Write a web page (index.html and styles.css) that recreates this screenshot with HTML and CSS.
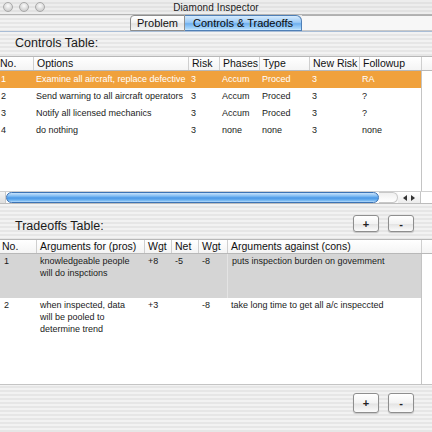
FILE: index.html
```html
<!DOCTYPE html>
<html>
<head>
<meta charset="utf-8">
<link rel="stylesheet" href="styles.css">
</head>
<body>
<div class="window">
  <div class="titlebar">
    <div class="lights"><span class="light"></span><span class="light"></span><span class="light"></span></div>
    <div class="title">Diamond Inspector</div>
    <div></div>
  </div>
  <div class="tabs">
    <div class="tabpad"></div>
    <div class="tab tab-first">Problem</div>
    <div class="tab tab-sel">Controls &amp; Tradeoffs</div>
    <div class="tabfill"></div>
  </div>

  <div class="label label1">Controls Table:</div>

  <div class="table t1">
    <div class="hdr g1">
      <div class="hc">No.</div><div class="hc">Options</div><div class="hc">Risk</div><div class="hc">Phases</div><div class="hc">Type</div><div class="hc">New Risk</div><div class="hc">Followup</div><div class="hc corner"></div>
    </div>
    <div class="tbody t1body">
      <div class="rows">
        <div class="row g1r sel"><div class="c num">1</div><div class="c">Examine all aircraft, replace defective</div><div class="c">3</div><div class="c">Accum</div><div class="c">Proced</div><div class="c">3</div><div class="c">RA</div></div>
        <div class="row g1r"><div class="c num">2</div><div class="c">Send warning to all aircraft operators</div><div class="c">3</div><div class="c">Accum</div><div class="c">Proced</div><div class="c">3</div><div class="c">?</div></div>
        <div class="row g1r"><div class="c num">3</div><div class="c">Notify all licensed mechanics</div><div class="c">3</div><div class="c">Accum</div><div class="c">Proced</div><div class="c">3</div><div class="c">?</div></div>
        <div class="row g1r"><div class="c num">4</div><div class="c">do nothing</div><div class="c">3</div><div class="c">none</div><div class="c">none</div><div class="c">3</div><div class="c">none</div></div>
      </div>
      <div class="vscroll"></div>
    </div>
    <div class="hscroll">
      <div class="hcap"></div>
      <div class="thumb"></div>
      <div class="track"></div>
      <div class="arrows"><span class="arr arr-l"></span><span class="arr arr-r"></span></div>
      <div class="hcorner"></div>
    </div>
  </div>

  <div class="midrow">
    <div class="label label2">Tradeoffs Table:</div>
    <div class="btns btns1"><button class="btn">+</button><button class="btn">-</button></div>
  </div>

  <div class="table t2">
    <div class="hdr g2">
      <div class="hc">No.</div><div class="hc">Arguments for (pros)</div><div class="hc">Wgt</div><div class="hc">Net</div><div class="hc">Wgt</div><div class="hc">Arguments against (cons)</div><div class="hc corner"></div>
    </div>
    <div class="tbody t2body">
      <div class="rows">
        <div class="row g2r r1"><div class="c">1</div><div class="c pros">knowledgeable people will do inspctions</div><div class="c">+8</div><div class="c">-5</div><div class="c">-8</div><div class="c lastc">puts inspection burden on govemment</div></div>
        <div class="row g2r r2"><div class="c">2</div><div class="c pros">when inspected, data will be pooled to determine trend</div><div class="c">+3</div><div class="c"></div><div class="c">-8</div><div class="c">take long time to get all a/c inspeccted</div></div>
      </div>
      <div class="vscroll"></div>
    </div>
  </div>

  <div class="btns btns2"><button class="btn">+</button><button class="btn">-</button></div>
</div>
</body>
</html>
```
FILE: styles.css
```css
* { box-sizing: border-box; }
html, body { margin: 0; padding: 0; }
body {
  width: 432px;
  height: 432px;
  overflow: hidden;
  font-family: "Liberation Sans", Arial, sans-serif;
  color: #1a1a1a;
  background: repeating-linear-gradient(to bottom, #f2f2f2 0, #f2f2f2 2px, #e6e6e6 2px, #e6e6e6 4px);
}
.window { display: flex; flex-direction: column; width: 432px; height: 432px; }

.titlebar {
  height: 15px;
  display: grid;
  grid-template-columns: 1fr auto 1fr;
  align-items: center;
  border-bottom: 1px solid #b4b4b4;
  background: repeating-linear-gradient(to bottom, #ededed 0, #ededed 2px, #e2e2e2 2px, #e2e2e2 4px);
}
.lights { display: flex; gap: 6px; padding-left: 3px; }
.light {
  width: 10px; height: 10px; border-radius: 50%;
  background: radial-gradient(circle at 50% 35%, #fbfbfb, #d2d2d2 70%, #bdbdbd);
  border: 1px solid #a9a9a9;
}
.title { font-size: 10px; color: #222; letter-spacing: 0.1px; }

.tabs { display: flex; height: 17px; border-bottom: 1px solid #a9bdd6; }
.tabpad { width: 130px; }
.tab {
  font-size: 11px; line-height: 15px; height: 16px;
  text-align: center; border: 1px solid #8e8e8e;
}
.tab-first {
  width: 55px;
  border-radius: 4px 0 0 0;
  background: linear-gradient(to bottom, #ffffff, #f0f0f0 50%, #e2e2e2 55%, #f6f6f6);
  color: #111;
}
.tab-sel {
  width: 117px;
  border-left: none;
  border-color: #4f7fb6;
  border-radius: 0 6px 0 0;
  background: linear-gradient(to bottom, #d6ebfd, #9ccaf6 45%, #6fb0ef 55%, #a8d6fb 90%, #cde8fd);
  color: #0a0a0a;
}
.tabfill {
  flex: 1; height: 16px;
  border-top: 1px solid #b0b0b0;
  border-bottom: 1px solid #c8c8c8;
  background: #f7f7f7;
}

.label { font-size: 12.5px; color: #1a1a1a; padding-left: 15px; }
.label1 { height: 24px; line-height: 23px; }

.table { background: #fff; }
.hdr {
  display: grid;
  height: 15px;
  border-top: 1px solid #b8b8b8;
  border-bottom: 1px solid #b8b8b8;
  background: linear-gradient(to bottom, #ffffff, #f4f4f4);
}
.hc {
  font-size: 10.5px; line-height: 13px; padding-left: 3px;
  border-left: 1px solid #cfcfcf; white-space: nowrap; overflow: hidden; color: #111;
}
.hc:first-child { border-left: none; padding-left: 0; }
.g1 { grid-template-columns: 33px 155px 31px 40px 50px 50px 62px 11px; }
.g1r { display: grid; grid-template-columns: 33px 155px 31px 40px 50px 50px 62px; }
.g2 { grid-template-columns: 36px 108px 27px 27px 29px 194px 11px; }
.g2r { display: grid; grid-template-columns: 36px 108px 27px 27px 29px 194px; }
.g2 .hc:first-child { padding-left: 2px; }

.tbody { display: flex; }
.rows { width: 421px; }
.vscroll { width: 11px; border-left: 1px solid #c4c4c4; background: #fff; }

.t1body { height: 120px; }
.row { font-size: 9px; color: #1a1a1a; }
.g1r { height: 17px; line-height: 16px; }
.g1r .c { padding-left: 3px; white-space: nowrap; overflow: hidden; }
.g1r .num { padding-left: 1px; }
.sel { background: #f0a13c; color: #fff; }

.hscroll {
  height: 13px; display: flex; align-items: stretch;
  border-top: 1px solid #d0d0d0; border-bottom: 1px solid #bcbcbc;
  background: #fafafa;
}
.hcap { width: 6px; border-right: 1px solid #c8c8c8; background: linear-gradient(to bottom, #f4f4f4, #dedede); }
.thumb {
  width: 373px;
  border: 1px solid #3c73b5;
  border-radius: 6px;
  background: linear-gradient(to bottom, #c9e3fb, #80bcf3 35%, #4b98e6 55%, #6db2f0 80%, #b7dcfb);
}
.track {
  width: 19px;
  border-radius: 0 6px 6px 0;
  border: 1px solid #c8c8c8; border-left: none;
  background: linear-gradient(to bottom, #f0f0f0, #ffffff);
}
.arrows {
  width: 23px; display: flex; align-items: center; justify-content: space-evenly;
  background: linear-gradient(to bottom, #ffffff, #ececec);
  border-right: 1px solid #c4c4c4;
}
.arr { width: 0; height: 0; border-top: 3px solid transparent; border-bottom: 3px solid transparent; }
.arr-l { border-right: 4px solid #333; }
.arr-r { border-left: 4px solid #333; }
.hcorner { flex: 1; background: #fff; }

.midrow { height: 35px; display: flex; justify-content: space-between; }
.label2 { line-height: 14px; padding-top: 15px; }
.btns { display: flex; gap: 9px; padding-right: 18px; }
.btns1 { padding-top: 11px; }
.btn {
  width: 26px; height: 17px; padding: 0;
  font-family: "Liberation Sans", Arial, sans-serif;
  font-size: 11px; font-weight: bold; line-height: 14px; color: #222;
  border: 1px solid #8e8e8e; border-radius: 3px;
  background: linear-gradient(to bottom, #ffffff, #f3f3f3 50%, #e4e4e4 55%, #fbfbfb);
  box-shadow: 0 1px 1px rgba(0,0,0,0.18);
}

.t2 { border-bottom: 1px solid #c4c4c4; }
.t2 .hdr { height: 15px; }
.g2r .c { padding-left: 4px; padding-right: 2px; line-height: 12px; padding-top: 1px; }
.g2r .pros { padding-right: 10px; }
.r1 { height: 44px; background: #d5d5d5; }
.r1 .lastc { border-left: 1px solid #e4e4e4; }
.r2 { height: 86px; background: #fff; }

.btns2 { justify-content: flex-end; padding-top: 8px; }
.btns2 .btn { height: 20px; }
```
